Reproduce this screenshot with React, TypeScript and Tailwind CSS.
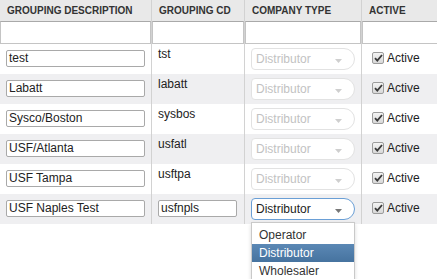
import React from 'react';

type Row = { desc: string; code: string; editing?: boolean };

const rows: Row[] = [
    { desc: 'test', code: 'tst' },
    { desc: 'Labatt', code: 'labatt' },
    { desc: 'Sysco/Boston', code: 'sysbos' },
    { desc: 'USF/Atlanta', code: 'usfatl' },
    { desc: 'USF Tampa', code: 'usftpa' },
    { desc: 'USF Naples Test', code: 'usfnpls', editing: true },
];

const Caret = ({ color }: { color: string }) => (
    <svg width="7" height="4" viewBox="0 0 7 4" className="absolute right-[12px] top-[10px]">
        <path d="M0 0h7L3.5 4z" fill={color} />
    </svg>
);

const CheckBox = () => (
    <span className="w-[12px] h-[12px] border border-[#9c9c9c] rounded-[2px] bg-gradient-to-b from-[#f4f4f4] to-[#d8d8d8] flex items-center justify-center">
        <svg width="9" height="8" viewBox="0 0 9 8">
            <path d="M1 4.2l2.3 2.4L8 1" stroke="#3a3a3a" strokeWidth="1.8" fill="none" />
        </svg>
    </span>
);

const App = () => {
    return (
        <div className="w-[437px] h-[279px] overflow-hidden bg-white font-['Liberation_Sans',Arial,sans-serif] text-[12px] text-[#333] relative">
            <div className="grid grid-cols-[152px_93px_117px_1fr] w-[460px]">
                {['GROUPING DESCRIPTION', 'GROUPING CD', 'COMPANY TYPE', 'ACTIVE'].map((h, i) => (
                    <div
                        key={h}
                        className={`h-[21px] leading-[21px] pl-[7px] bg-[#e9e9e9] text-[10px] font-bold text-[#333] whitespace-nowrap ${i < 3 ? 'border-r border-[#d2d2d2]' : ''} ${i === 3 ? 'pl-[5px]' : ''}`}
                    >
                        {h}
                    </div>
                ))}

                {[0, 1, 2, 3].map((i) => (
                    <div key={i} className={`h-[23px] bg-white ${i < 3 ? 'border-r border-[#d2d2d2]' : ''}`}>
                        <div className="h-full w-full border border-[#c4c4c4] border-t-[#a9a9a9] bg-white" />
                    </div>
                ))}

                {rows.map((r, idx) => {
                    const bg = idx % 2 === 1 ? 'bg-[#efeff1]' : 'bg-white';
                    return (
                        <React.Fragment key={r.desc}>
                            <div className={`h-[30px] ${bg} border-r border-[#d2d2d2] pt-[6px] pl-[6px]`}>
                                <div className="w-[139px] h-[17px] border border-[#a9a9a9] rounded-[2px] bg-white pl-[2px] leading-[15px] text-[#222]">
                                    {r.desc}
                                </div>
                            </div>
                            <div className={`h-[30px] ${bg} border-r border-[#d2d2d2] pl-[6px] ${r.editing ? 'pt-[6px]' : 'pt-[3px]'}`}>
                                {r.editing ? (
                                    <div className="w-[79px] h-[17px] border border-[#a9a9a9] rounded-[2px] bg-white pl-[2px] leading-[15px] text-[#222]">
                                        {r.code}
                                    </div>
                                ) : (
                                    <div className="leading-[14px] text-[#222]">{r.code}</div>
                                )}
                            </div>
                            <div className={`h-[30px] ${bg} border-r border-[#d2d2d2] pt-[4px] pl-[6px] relative`}>
                                <div
                                    className={`relative w-[104px] h-[22px] rounded-l-[4px] rounded-r-[11px] border pl-[4px] leading-[20px] ${
                                        r.editing
                                            ? 'border-[#6a9fd6] bg-white text-[#222]'
                                            : 'border-[#e2e2e2] bg-white text-[#c2c2c2]'
                                    }`}
                                >
                                    Distributor
                                    <Caret color={r.editing ? '#777' : '#cfcfcf'} />
                                </div>
                            </div>
                            <div className={`h-[30px] ${bg} pt-[7px] pl-[10px] flex items-start gap-[3px]`}>
                                <span className="mt-[1px]">
                                    <CheckBox />
                                </span>
                                <span className="leading-[14px] text-[#222]">Active</span>
                            </div>
                        </React.Fragment>
                    );
                })}
            </div>

            <div className="absolute left-[251px] top-[222px] w-[104px] bg-white border border-[#c9c9c9] shadow-[0_2px_4px_rgba(0,0,0,0.15)] pt-[3px] pb-[2px]">
                {['Operator', 'Distributor', 'Wholesaler'].map((o) => (
                    <div
                        key={o}
                        className={`h-[18px] leading-[18px] pl-[7px] ${
                            o === 'Distributor'
                                ? 'bg-gradient-to-b from-[#5b88b5] to-[#46739f] text-white'
                                : 'text-[#333]'
                        }`}
                    >
                        {o}
                    </div>
                ))}
            </div>
        </div>
    );
};

export default App;
